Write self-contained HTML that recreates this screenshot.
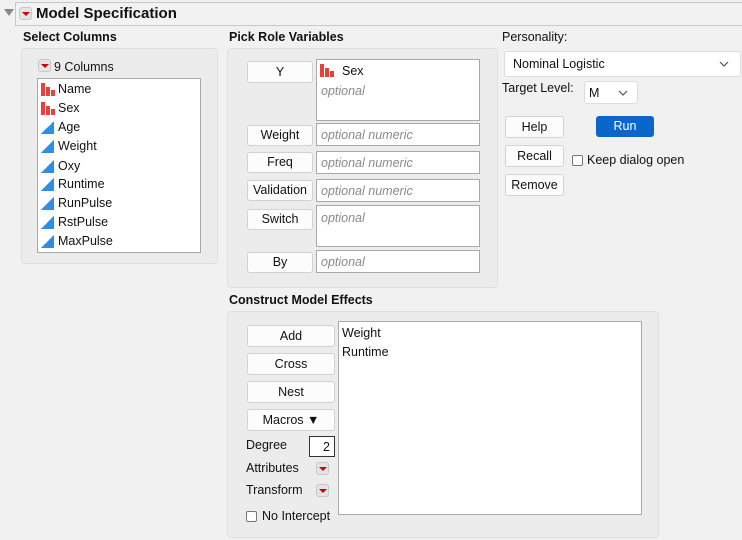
<!DOCTYPE html>
<html><head><style>
*{box-sizing:border-box;margin:0;padding:0}
body{width:742px;height:540px;background:#f1f1f1;font-family:"Liberation Sans",sans-serif;font-size:12.5px;color:#111;position:relative;overflow:hidden}
.a{position:absolute}
.panel{position:absolute;background:#ececec;border:1px solid #e0e0e0;border-radius:4px}
.btn{position:absolute;background:#fcfcfc;border:1px solid #d2d2d2;border-radius:3px;text-align:center;font-size:12.5px}
.box{position:absolute;background:#fff;border:1px solid #a9a9a9}
.ph{color:#8a8a8a;font-style:italic;position:absolute;left:4px}
.red{position:absolute;width:13px;height:13px;background:#e4e4e4;border:1px solid #c8c8c8;border-radius:3px}
.red:after{content:"";position:absolute;left:2px;top:4px;border-left:4px solid transparent;border-right:4px solid transparent;border-top:4px solid #c00}
.bar{position:absolute;width:14px;height:13px}
.bar i{position:absolute;bottom:0;width:4px;background:#e8413a}
.tri{position:absolute;width:13px;height:13px;background:linear-gradient(to top left,#2f8de4 50%,transparent 50%)}
.lb{position:absolute;font-weight:bold;font-size:12.5px}
.cb{position:absolute;width:11px;height:11px;border:1px solid #777;background:#fff;border-radius:2px}
.chev{position:absolute}
</style></head><body>
<div class="a" style="left:4px;top:9px;border-left:5px solid transparent;border-right:5px solid transparent;border-top:7px solid #888"></div>
<div class="a" style="left:15px;top:2px;width:728px;height:24px;border:1px solid #c8c8c8;background:#f2f2f2"></div>
<div class="red" style="left:19px;top:7px"></div>
<div class="a" style="left:36px;top:5px;font-weight:bold;font-size:15px">Model Specification</div>

<div class="lb" style="left:23px;top:30px">Select Columns</div>
<div class="panel" style="left:21px;top:48px;width:197px;height:216px"></div>
<div class="red" style="left:38px;top:59px"></div>
<div class="a" style="left:54px;top:60px">9 Columns</div>
<div class="box" style="left:37px;top:78px;width:164px;height:175px"></div>
<div class="bar" style="left:41px;top:83px"><i style="left:0;height:13px"></i><i style="left:5px;height:9px"></i><i style="left:10px;height:6px"></i></div>
<div class="a" style="left:58px;top:82px">Name</div>
<div class="bar" style="left:41px;top:102px"><i style="left:0;height:13px"></i><i style="left:5px;height:9px"></i><i style="left:10px;height:6px"></i></div>
<div class="a" style="left:58px;top:101px">Sex</div>
<div class="tri" style="left:41px;top:121px"></div><div class="a" style="left:58px;top:120px">Age</div>
<div class="tri" style="left:41px;top:140px"></div><div class="a" style="left:58px;top:139px">Weight</div>
<div class="tri" style="left:41px;top:160px"></div><div class="a" style="left:58px;top:159px">Oxy</div>
<div class="tri" style="left:41px;top:178px"></div><div class="a" style="left:58px;top:177px">Runtime</div>
<div class="tri" style="left:41px;top:197px"></div><div class="a" style="left:58px;top:196px">RunPulse</div>
<div class="tri" style="left:41px;top:216px"></div><div class="a" style="left:58px;top:215px">RstPulse</div>
<div class="tri" style="left:41px;top:235px"></div><div class="a" style="left:58px;top:234px">MaxPulse</div>

<div class="lb" style="left:229px;top:30px">Pick Role Variables</div>
<div class="panel" style="left:227px;top:48px;width:271px;height:240px"></div>
<div class="btn" style="left:247px;top:61px;width:66px;height:22px;line-height:20px">Y</div>
<div class="btn" style="left:247px;top:125px;width:66px;height:21px;line-height:19px">Weight</div>
<div class="btn" style="left:247px;top:152px;width:66px;height:21px;line-height:19px">Freq</div>
<div class="btn" style="left:247px;top:180px;width:66px;height:21px;line-height:19px">Validation</div>
<div class="btn" style="left:247px;top:209px;width:66px;height:21px;line-height:19px">Switch</div>
<div class="btn" style="left:247px;top:252px;width:66px;height:21px;line-height:19px">By</div>
<div class="box" style="left:316px;top:59px;width:164px;height:62px">
<div class="bar" style="left:3px;top:4px"><i style="left:0;height:13px"></i><i style="left:5px;height:9px"></i><i style="left:10px;height:6px"></i></div>
<div class="a" style="left:25px;top:4px">Sex</div><div class="ph" style="top:24px">optional</div></div>
<div class="box" style="left:316px;top:123px;width:164px;height:23px"><div class="ph" style="top:4px">optional numeric</div></div>
<div class="box" style="left:316px;top:151px;width:164px;height:23px"><div class="ph" style="top:4px">optional numeric</div></div>
<div class="box" style="left:316px;top:179px;width:164px;height:23px"><div class="ph" style="top:4px">optional numeric</div></div>
<div class="box" style="left:316px;top:205px;width:164px;height:42px"><div class="ph" style="top:5px">optional</div></div>
<div class="box" style="left:316px;top:250px;width:164px;height:23px"><div class="ph" style="top:4px">optional</div></div>

<div class="a" style="left:502px;top:30px">Personality:</div>
<div class="a" style="left:504px;top:51px;width:237px;height:26px;background:#fff;border:1px solid #ddd;border-radius:3px"><span class="a" style="left:8px;top:5px">Nominal Logistic</span><svg class="chev" style="right:11px;top:9px" width="10" height="6"><path d="M1 1L5 5L9 1" fill="none" stroke="#555" stroke-width="1.2"/></svg></div>
<div class="a" style="left:502px;top:81px">Target Level:</div>
<div class="a" style="left:584px;top:81px;width:54px;height:23px;background:#fff;border:1px solid #ddd;border-radius:3px"><span class="a" style="left:4px;top:4px">M</span><svg class="chev" style="left:33px;top:8px" width="10" height="6"><path d="M1 1L5 5L9 1" fill="none" stroke="#555" stroke-width="1.2"/></svg></div>
<div class="btn" style="left:505px;top:116px;width:59px;height:22px;line-height:20px">Help</div>
<div class="a" style="left:596px;top:116px;width:58px;height:21px;line-height:21px;background:#0a66c8;color:#fff;text-align:center;border-radius:3px">Run</div>
<div class="btn" style="left:505px;top:145px;width:59px;height:22px;line-height:20px">Recall</div>
<div class="cb" style="left:572px;top:155px"></div><div class="a" style="left:587px;top:153px">Keep dialog open</div>
<div class="btn" style="left:505px;top:174px;width:59px;height:22px;line-height:20px">Remove</div>

<div class="lb" style="left:229px;top:293px">Construct Model Effects</div>
<div class="panel" style="left:227px;top:311px;width:432px;height:227px"></div>
<div class="btn" style="left:247px;top:325px;width:88px;height:22px;line-height:20px">Add</div>
<div class="btn" style="left:247px;top:353px;width:88px;height:22px;line-height:20px">Cross</div>
<div class="btn" style="left:247px;top:381px;width:88px;height:22px;line-height:20px">Nest</div>
<div class="btn" style="left:247px;top:409px;width:88px;height:22px;line-height:20px">Macros &#9660;</div>
<div class="box" style="left:338px;top:321px;width:304px;height:194px"><div class="a" style="left:3px;top:4px">Weight</div><div class="a" style="left:3px;top:23px">Runtime</div></div>
<div class="a" style="left:246px;top:438px">Degree</div>
<div class="a" style="left:309px;top:436px;width:26px;height:21px;background:#fff;border:1px solid #333;text-align:right;padding:3px 4px 0 0">2</div>
<div class="a" style="left:246px;top:461px">Attributes</div><div class="red" style="left:316px;top:462px"></div>
<div class="a" style="left:246px;top:483px">Transform</div><div class="red" style="left:316px;top:484px"></div>
<div class="cb" style="left:246px;top:511px"></div><div class="a" style="left:262px;top:509px">No Intercept</div>
</body></html>
